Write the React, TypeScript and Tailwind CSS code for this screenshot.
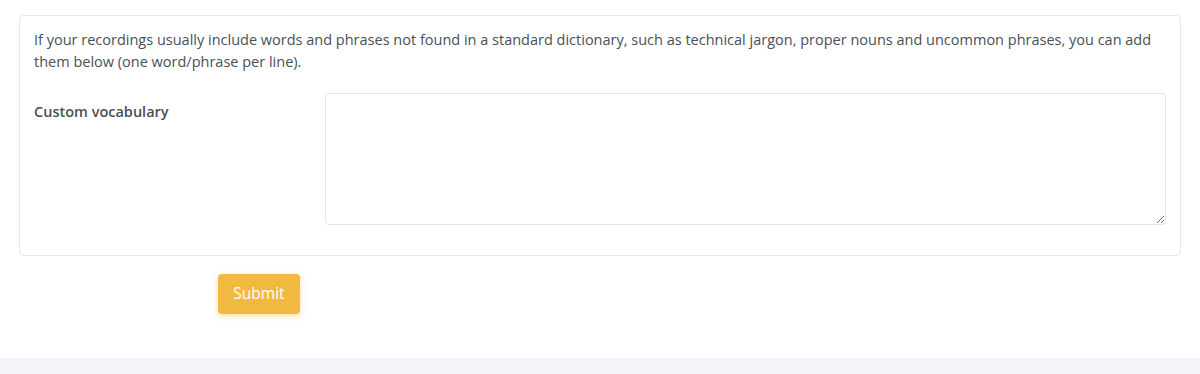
import React from 'react';

export default function App() {
    return (
        <div className="w-[1200px] h-[374px] bg-white flex flex-col font-['Open_Sans',sans-serif] text-[#495057]">
            <div className="px-[19px] pt-[15px]">
                {/* Vocabulary card */}
                <div className="border border-[#e6e7eb] rounded-[4px] px-[14px] pt-[14px] pb-[14px]">
                    <p className="text-[14.5px] leading-[22px] mb-[20px] -mt-[1px]">
                        If your recordings usually include words and phrases not found in a standard dictionary, such as technical jargon, proper nouns and uncommon phrases, you can add them below (one word/phrase per line).
                    </p>
                    <div className="flex mb-[16px]">
                        <label className="w-[291px] shrink-0 pt-[8px] text-[14.5px] leading-[22px] font-semibold text-[#4a4f56]">
                            Custom vocabulary
                        </label>
                        <textarea className="flex-1 h-[132px] border border-[#e3e4e8] rounded-[4px] outline-none px-3 py-2 text-[14px]" />
                    </div>
                </div>
            </div>
            <div className="pl-[218px] pt-[18px]">
                <button className="w-[82px] h-[40px] rounded-[4px] bg-[#f2b940] text-white text-[15.5px] shadow-[0_2px_6px_rgba(242,185,64,0.45)]">
                    Submit
                </button>
            </div>
            <div className="flex-1" />
            <div className="h-[16px] bg-[#f4f4f8]" />
        </div>
    );
}
